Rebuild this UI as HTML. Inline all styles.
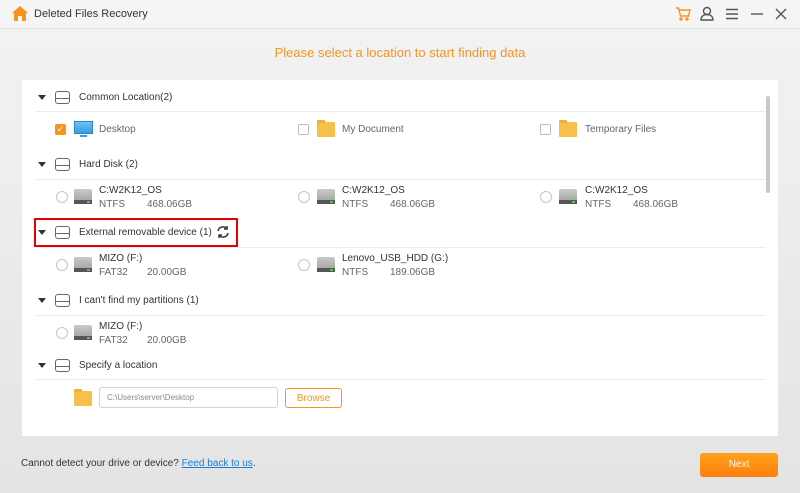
<!DOCTYPE html>
<html><head><style>
*{margin:0;padding:0;box-sizing:border-box}
body{width:800px;height:493px;overflow:hidden;font-family:"Liberation Sans",sans-serif;font-size:10px;color:#333;background:linear-gradient(#f3f3f3,#e4e4e4);position:relative}
.a{position:absolute;white-space:nowrap}
.tb{left:0;top:0;width:800px;height:29px;background:#f5f5f5;border-bottom:1px solid #e2e2e2}
.panel{left:22px;top:80px;width:756px;height:356px;background:#fff}
.sep{position:absolute;height:1px;background:#ececec;left:36px;width:730px}
.tri{width:0;height:0;border-left:4px solid transparent;border-right:4px solid transparent;border-top:5px solid #333}
.hd{width:15px;height:13px;border:1.3px solid #666;border-radius:3px}
.hd:after{content:"";position:absolute;left:0;right:0;top:6px;border-top:1.3px solid #666}
.cb{width:11px;height:11px;border:1px solid #bbb;border-radius:2px;background:#fff}
.rd{width:12px;height:12px;border:1px solid #c4c4c4;border-radius:50%;background:#fff}
.drv{width:18px;height:15px;background:linear-gradient(#c9c9c9,#9c9c9c);border-radius:2px 2px 1px 1px}
.drv:after{content:"";position:absolute;left:0;right:0;bottom:0;height:4px;background:#555}
.drv:before{content:"";position:absolute;right:2px;bottom:1px;width:3px;height:2px;background:#4c4;z-index:1}
.fold{width:18px;height:15px;background:#f7c04a;border-radius:1px}
.fold:before{content:"";position:absolute;left:0;top:-2px;width:8px;height:3px;background:#f0b030;border-radius:1px 1px 0 0}
.g{color:#666}
.s{position:absolute;left:48px}
</style></head><body>
<div class="a tb"></div>
<svg class="a" style="left:12px;top:6px" width="16" height="15" viewBox="0 0 16 15"><path d="M8 0 L16 7 L14 7 L14 15 L10 15 L10 10 L6 10 L6 15 L2 15 L2 7 L0 7Z" fill="#f7931e"/></svg>
<div class="a" style="left:34px;top:8px;font-size:11px;color:#333">Deleted Files Recovery</div>
<svg class="a" style="left:675px;top:7px" width="16" height="14" viewBox="0 0 16 14" fill="none" stroke="#f7931e" stroke-width="1.4"><path d="M1 1h2.5l2 8h8l1.5-6H4.5"/><circle cx="6" cy="12" r="1" fill="#f7931e"/><circle cx="12" cy="12" r="1" fill="#f7931e"/></svg>
<svg class="a" style="left:700px;top:6px" width="14" height="15" viewBox="0 0 14 15" fill="none" stroke="#555" stroke-width="1.4"><circle cx="7" cy="5" r="3.5"/><path d="M1 14c0-4 3-5.5 6-5.5s6 1.5 6 5.5z"/></svg>
<svg class="a" style="left:725px;top:8px" width="14" height="12" stroke="#555" stroke-width="1.4"><path d="M1 1.5h12M1 6h12M1 10.5h12"/></svg>
<svg class="a" style="left:750px;top:8px" width="14" height="12" stroke="#555" stroke-width="1.4"><path d="M1 6h12"/></svg>
<svg class="a" style="left:775px;top:8px" width="12" height="12" stroke="#555" stroke-width="1.4"><path d="M1 1l10 10M11 1L1 11"/></svg>
<div class="a" style="left:0;width:800px;text-align:center;top:45px;font-size:13px;color:#f7931e">Please select a location to start finding data</div>
<div class="a panel"></div>
<div class="a" style="left:766px;top:96px;width:4px;height:97px;background:#c8c8c8;border-radius:2px"></div>

<div class="a tri" style="left:38px;top:95px"></div><div class="a hd" style="left:55px;top:91px"></div>
<div class="a" style="left:79px;top:92px">Common Location(2)</div>
<div class="sep" style="top:111px"></div>
<div class="a" style="left:55px;top:124px;width:11px;height:11px;background:#f7931e;border-radius:2px;color:#fff;font-size:9px;line-height:11px;text-align:center">✓</div>
<div class="a" style="left:74px;top:121px;width:19px;height:13px;background:linear-gradient(#6ec3f5,#3b9be0);border:1px solid #2d86cc"></div>
<div class="a" style="left:80px;top:135px;width:7px;height:2px;background:#3b9be0"></div>
<div class="a g" style="left:99px;top:124px">Desktop</div>
<div class="a cb" style="left:298px;top:124px"></div><div class="a fold" style="left:317px;top:122px"></div>
<div class="a g" style="left:342px;top:124px">My Document</div>
<div class="a cb" style="left:540px;top:124px"></div><div class="a fold" style="left:559px;top:122px"></div>
<div class="a g" style="left:585px;top:124px">Temporary Files</div>

<div class="a tri" style="left:38px;top:162px"></div><div class="a hd" style="left:55px;top:158px"></div>
<div class="a" style="left:79px;top:159px">Hard Disk (2)</div>
<div class="sep" style="top:179px"></div>
<div class="a rd" style="left:56px;top:191px"></div><div class="a drv" style="left:74px;top:189px"></div>
<div class="a" style="left:99px;top:185px">C:W2K12_OS</div><div class="a g" style="left:99px;top:199px">NTFS<span class="s">468.06GB</span></div>
<div class="a rd" style="left:298px;top:191px"></div><div class="a drv" style="left:317px;top:189px"></div>
<div class="a" style="left:342px;top:185px">C:W2K12_OS</div><div class="a g" style="left:342px;top:199px">NTFS<span class="s">468.06GB</span></div>
<div class="a rd" style="left:540px;top:191px"></div><div class="a drv" style="left:559px;top:189px"></div>
<div class="a" style="left:585px;top:185px">C:W2K12_OS</div><div class="a g" style="left:585px;top:199px">NTFS<span class="s">468.06GB</span></div>

<div class="a" style="left:34px;top:218px;width:204px;height:29px;border:2px solid #e60000"></div>
<div class="a tri" style="left:38px;top:230px"></div><div class="a hd" style="left:55px;top:226px"></div>
<div class="a" style="left:79px;top:227px">External removable device (1)</div>
<svg class="a" style="left:216px;top:225px" width="14" height="14" viewBox="0 0 14 14" fill="none" stroke="#333" stroke-width="1.5"><path d="M2 6a5 5 0 0 1 9-2M12 8a5 5 0 0 1-9 2"/><path d="M11 1v3H8M3 13v-3h3"/></svg>
<div class="sep" style="top:247px"></div>
<div class="a rd" style="left:56px;top:259px"></div><div class="a drv" style="left:74px;top:257px"></div>
<div class="a" style="left:99px;top:253px">MIZO (F:)</div><div class="a g" style="left:99px;top:267px">FAT32<span class="s">20.00GB</span></div>
<div class="a rd" style="left:298px;top:259px"></div><div class="a drv" style="left:317px;top:257px"></div>
<div class="a" style="left:342px;top:253px">Lenovo_USB_HDD (G:)</div><div class="a g" style="left:342px;top:267px">NTFS<span class="s">189.06GB</span></div>

<div class="a tri" style="left:38px;top:298px"></div><div class="a hd" style="left:55px;top:294px"></div>
<div class="a" style="left:79px;top:295px">I can't find my partitions (1)</div>
<div class="sep" style="top:315px"></div>
<div class="a rd" style="left:56px;top:327px"></div><div class="a drv" style="left:74px;top:325px"></div>
<div class="a" style="left:99px;top:321px">MIZO (F:)</div><div class="a g" style="left:99px;top:335px">FAT32<span class="s">20.00GB</span></div>

<div class="a tri" style="left:38px;top:363px"></div><div class="a hd" style="left:55px;top:359px"></div>
<div class="a" style="left:79px;top:360px">Specify a location</div>
<div class="sep" style="top:379px"></div>
<div class="a fold" style="left:74px;top:391px"></div>
<div class="a" style="left:99px;top:387px;width:179px;height:21px;border:1px solid #d4d4d4;border-radius:3px;font-size:8px;color:#888;padding:5px 7px">C:\Users\server\Desktop</div>
<div class="a" style="left:285px;top:388px;width:57px;height:20px;border:1px solid #f7931e;border-radius:3px;color:#f7931e;text-align:center;font-size:10px;line-height:19px">Browse</div>

<div class="a" style="left:21px;top:458px">Cannot detect your drive or device? <span style="color:#1a7fd4;text-decoration:underline">Feed back to us</span>.</div>
<div class="a" style="left:700px;top:453px;width:78px;height:24px;background:linear-gradient(#ffa11a,#ff7f0f);border-radius:3px;color:#fff;text-align:center;font-size:10px;line-height:24px">Next</div>
</body></html>
